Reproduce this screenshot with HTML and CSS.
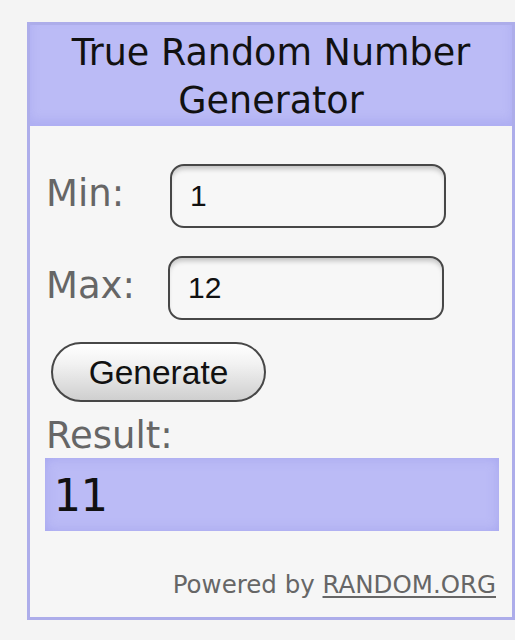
FILE: index.html
```html
<!DOCTYPE html>
<html>
<head>
<meta charset="utf-8">
<link rel="stylesheet" href="styles.css">
</head>
<body>
<div class="panel">
  <div class="header">True Random Number<br>Generator</div>
  <div class="content">
    <div class="row row-min">
      <span class="label">Min:</span>
      <div class="field">1</div>
    </div>
    <div class="row row-max">
      <span class="label">Max:</span>
      <div class="field">12</div>
    </div>
    <div class="btn-row"><span class="btn">Generate</span></div>
    <div class="label result-label">Result:</div>
    <div class="result">11</div>
    <div class="powered">Powered by <span class="link">RANDOM.ORG</span></div>
  </div>
</div>
</body>
</html>
```

FILE: styles.css
```css
html, body {
  margin: 0;
  padding: 0;
  background: #f4f4f4;
}
body {
  width: 515px;
  height: 640px;
  overflow: hidden;
}
.panel {
  box-sizing: border-box;
  margin: 22px 0 0 27px;
  width: 488px;
  height: 598px;
  border: 3px solid #adadea;
  background: #f6f6f6;
}
.header {
  box-sizing: border-box;
  height: 101px;
  padding-top: 4px;
  background: #bbbbf6;
  box-shadow: inset 0 -6px 10px rgba(150,150,235,0.35);
  text-align: center;
  font-family: "DejaVu Sans", sans-serif;
  font-size: 36.5px;
  line-height: 48px;
  color: #111;
}
.content {
  padding: 0 12px 0 15px;
  display: flex;
  flex-direction: column;
}
.row {
  display: flex;
  align-items: center;
}
.row-min { margin-top: 38px; }
.row-max { margin-top: 28px; }
.label {
  font-family: "DejaVu Sans", sans-serif;
  font-size: 37px;
  line-height: 36px;
  color: #666;
  width: 124px;
  padding-left: 1px;
  box-sizing: border-box;
  margin-bottom: 4px;
}
.field {
  box-sizing: border-box;
  width: 276px;
  height: 64px;
  border: 2.5px solid #474747;
  border-radius: 14px;
  background: #f7f7f7;
  box-shadow: inset 0 5px 5px -2px rgba(0,0,0,0.22);
  padding-left: 18px;
  display: flex;
  align-items: center;
  font-family: "Liberation Sans", Arial, sans-serif;
  font-size: 30px;
  color: #111;
}
.row-min .field { margin-left: 1px; }
.row-max .field { margin-left: -1px; }
.btn-row {
  margin-top: 22px;
  display: flex;
}
.btn {
  box-sizing: border-box;
  margin-left: 6px;
  width: 215px;
  height: 60px;
  border: 2.5px solid #474747;
  border-radius: 30px;
  background: linear-gradient(#ffffff 0%, #f2f2f2 35%, #cfcfcf 100%);
  display: flex;
  align-items: center;
  justify-content: center;
  font-family: "Liberation Sans", Arial, sans-serif;
  font-size: 33.5px;
  color: #111;
  padding-top: 2px;
}
.result-label {
  margin-top: 16px;
  margin-bottom: 0;
  width: auto;
}
.result {
  box-sizing: border-box;
  margin-top: 4px;
  width: 454px;
  height: 73px;
  background: #bbbbf6;
  box-shadow: inset 0 0 12px rgba(140,140,230,0.45);
  display: flex;
  align-items: center;
  padding-left: 8px;
  padding-top: 2px;
  font-family: "DejaVu Sans Mono", monospace;
  font-size: 45px;
  color: #111;
}
.powered {
  margin-top: 42px;
  text-align: right;
  padding-right: 4px;
  font-family: "DejaVu Sans", sans-serif;
  font-size: 24.5px;
  line-height: 24px;
  color: #666;
}
.link {
  text-decoration: underline;
  text-underline-offset: 3px;
}
```
